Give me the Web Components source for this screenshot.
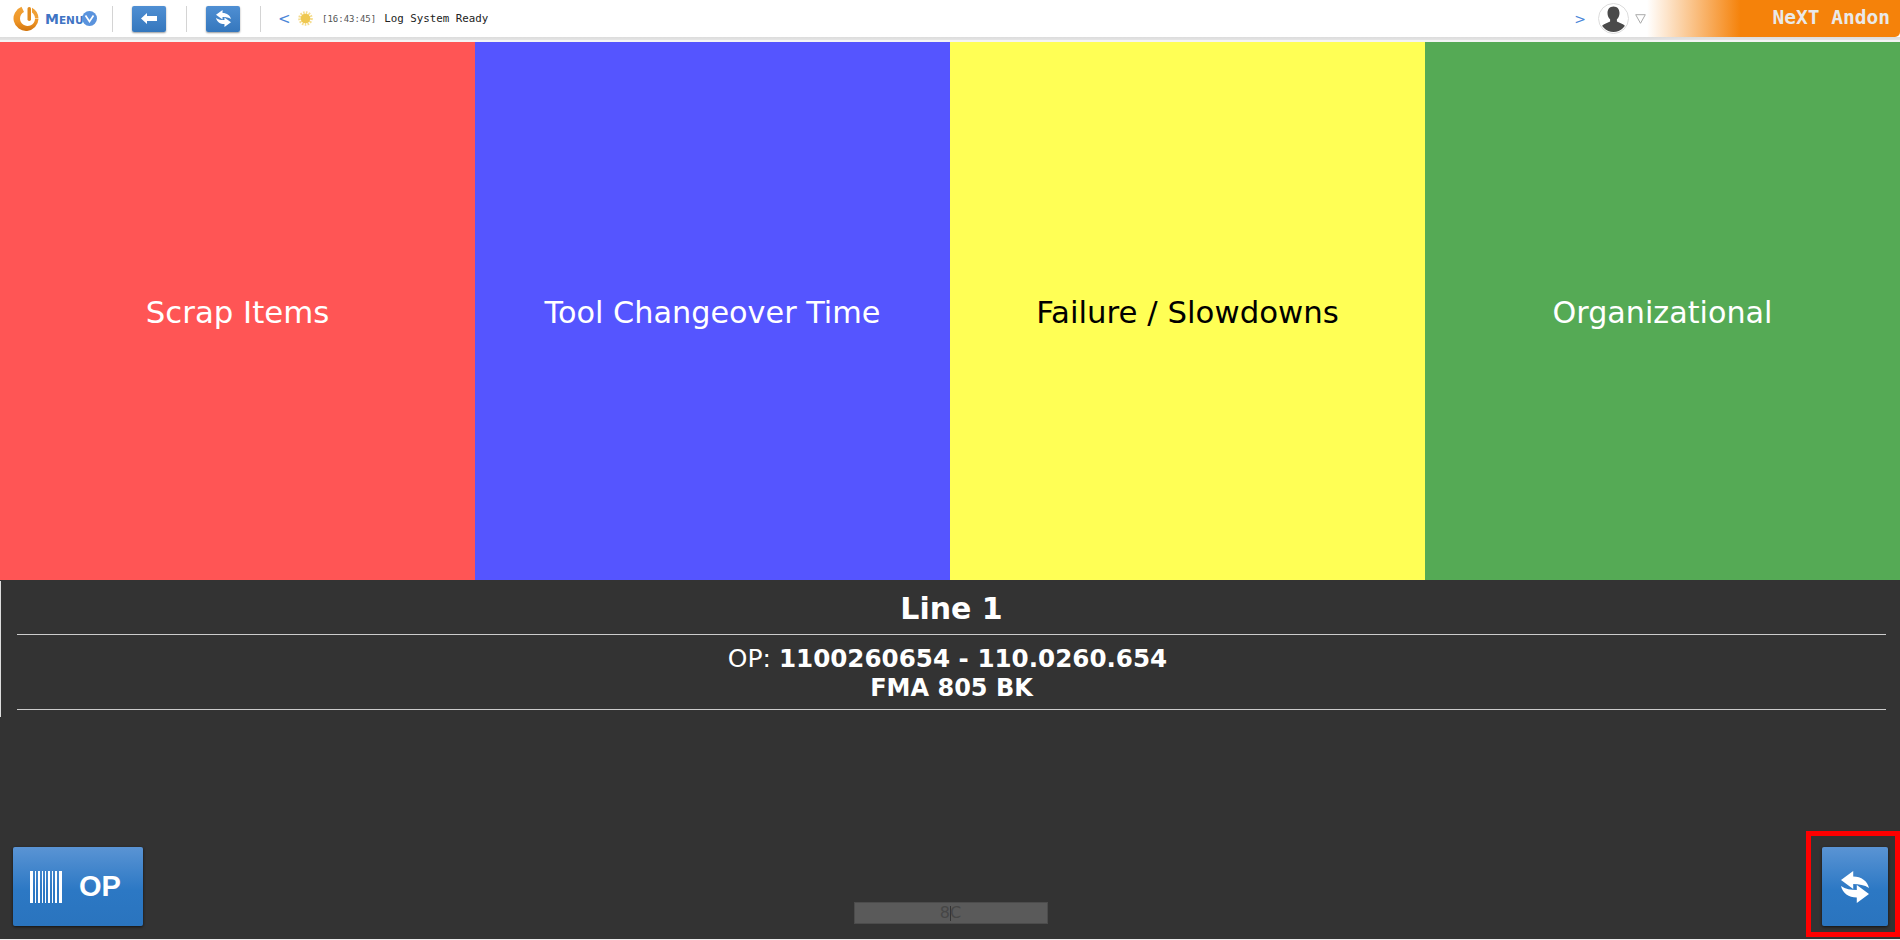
<!DOCTYPE html>
<html><head><meta charset="utf-8">
<style>
html,body{margin:0;padding:0;height:100%;overflow:hidden;background:#333;}
</style></head><body>
<template id="t-root">
<style>
:host{display:flex;flex-direction:column;height:940px;width:1900px;font-family:"DejaVu Sans",sans-serif;background:#333}
.tiles{display:grid;grid-template-columns:repeat(4,475px);height:538px;flex:none}
</style>
<top-bar></top-bar>
<div class="tiles">
<cat-tile style="--bg:#ff5555;--fg:#fff;--fs:30.800px">Scrap Items</cat-tile>
<cat-tile style="--bg:#5555ff;--fg:#fff;--fs:30.300px">Tool Changeover Time</cat-tile>
<cat-tile style="--bg:#ffff55;--fg:#000;--fs:30.800px">Failure / Slowdowns</cat-tile>
<cat-tile style="--bg:#55aa55;--fg:#fff;--fs:30.200px">Organizational</cat-tile>
</div>
<info-panel></info-panel>
</template>

<template id="t-bar">
<style>
:host{display:flex;align-items:center;flex:none;height:42px;padding:0 0 5px 12px;box-sizing:border-box;background:linear-gradient(#fff 37px,#dcdcdc 37px,#e4e4e4 40px,#f4f4f4 40px);font-family:"DejaVu Sans Mono","Liberation Mono",monospace}
.logo{flex:none;display:block}
.menu{display:inline-block;width:37px;margin-left:6px;font:bold 10.500px "DejaVu Sans",sans-serif;color:#3f74c4;white-space:nowrap;flex:none}
.menu span{font-size:14px}
.v{width:15px;height:15px;border-radius:50%;background:#5a93dd;display:inline-flex;align-items:center;justify-content:center;flex:none}
.sep{width:1px;height:26px;background:#d4d4d4;flex:none}
.s1{margin:0 19px 0 15px}.s2{margin:0 19px 0 20px}.s3{margin:0 17px 0 20px}
.lt{color:#4a86d8;font:15px "DejaVu Sans",sans-serif;width:20px;flex:none}
.time{font-size:9px;color:#555;margin-left:9px;white-space:nowrap}
.msg{font-size:10.800px;color:#222;margin-left:8px;white-space:nowrap}
.spacer{flex:1}
.gt{color:#4a86d8;font:14px "DejaVu Sans",sans-serif;margin-right:12px;flex:none}
.avatar{width:31px;height:31px;flex:none;display:block}
.tri{margin-left:6px;flex:none}
.brand{width:253px;align-self:stretch;margin-left:1px;display:flex;align-items:center;justify-content:flex-end;padding-right:10px;box-sizing:border-box;background:linear-gradient(90deg,rgba(245,130,10,0),#f5820a 37%);border-bottom-right-radius:5px;color:#e9e9e9;font:bold 19.500px "DejaVu Sans Mono",monospace;flex:none}
.brand-text{transform:translateY(-1px)}
</style>
<svg class="logo" width="27" height="26" viewBox="0 0 27 26">
<defs><linearGradient id="lg" x1="0" y1="0" x2="0" y2="1"><stop offset="0" stop-color="#f2a338"/><stop offset=".6" stop-color="#ee9526"/><stop offset="1" stop-color="#d2750e"/></linearGradient></defs>
<path d="M9.500.800A12.500 12.500 0 1 0 26.500 13H23A7.500 7.500 0 1 1 12 5.900z" fill="url(#lg)"/>
<path d="M20 1.800A12.500 12.500 0 0 1 26.500 12.500H23A7.500 7.500 0 0 0 20 6.500z" fill="#f0a035"/>
<rect x="15.500" y="1" width="3.500" height="14" rx="1.700" fill="#e08a1e"/>
</svg>
<span class="menu"><span>M</span>ENU</span>
<span class="v"><svg width="11" height="9" viewBox="0 0 11 9"><path d="M1.500 1.500l4 6 4-6" fill="none" stroke="#fff" stroke-width="1.700"/></svg></span>
<span class="sep s1"></span>
<bar-btn><svg width="16" height="11" viewBox="0 0 16 11"><path d="M0 5.500L6 0v3h10v5H6v3z" fill="#fff"/></svg></bar-btn>
<span class="sep s2"></span>
<bar-btn><sync-icon style="--w:15px;--h:17px"></sync-icon></bar-btn>
<span class="sep s3"></span>
<span class="lt">&lt;</span>
<svg width="15" height="15" viewBox="0 0 15 15" style="flex:none"><circle cx="7.500" cy="7.500" r="5.800" fill="none" stroke="#f5dc8c" stroke-width="3" stroke-dasharray="1.500 1.200"/><circle cx="7.500" cy="7.500" r="4.800" fill="#efc850"/></svg>
<span class="time">[16:43:45]</span><span class="msg">Log System Ready</span>
<span class="spacer"></span>
<span class="gt">&gt;</span>
<svg class="avatar" viewBox="0 0 31 31"><circle cx="15.500" cy="15.500" r="15" fill="#fff" stroke="#dcdcdc"/><clipPath id="ac"><circle cx="15.500" cy="15.500" r="13.500"/></clipPath><path clip-path="url(#ac)" d="M15.500 3.500c3.800 0 6 2.800 6 6.500 0 2.800-1.100 5-2.600 6.300v2.200l6 2.800c1.700.8 2.600 2.100 2.600 3.700v6H3.500v-6c0-1.600.9-2.900 2.600-3.700l6-2.800v-2.200c-1.500-1.300-2.600-3.500-2.600-6.300 0-3.700 2.200-6.500 6-6.500z" fill="#4a4a4a"/></svg>
<svg class="tri" width="11" height="10" viewBox="0 0 11 10"><path d="M.7.700h9.600L5.500 9.300z" fill="#fff" stroke="#aaa"/></svg>
<div class="brand"><span class="brand-text">NeXT Andon</span></div>
</template>

<template id="t-btn">
<style>
:host{display:flex;align-items:center;justify-content:center;width:34px;height:26px;border-radius:2px;background:linear-gradient(#4f8fd3,#3577bd);box-shadow:0 1px 2px #0006;flex:none}
</style><slot></slot>
</template>

<template id="t-sync">
<style>:host{display:inline-block;width:var(--w);height:var(--h);line-height:0}svg{width:100%;height:100%;display:block}</style>
<svg viewBox="0 0 27.500 32" preserveAspectRatio="none"><path d="M0 9L12 0V5.500C20 5.500 26 10 27.500 17 23 14 18 13 12 13V18z" fill="#fff"/><path d="M0 9L12 0V5.500C20 5.500 26 10 27.500 17 23 14 18 13 12 13V18z" fill="#fff" transform="rotate(180 13.750 16)"/></svg>
</template>

<template id="t-tile">
<style>:host{display:flex;align-items:center;justify-content:center;background:var(--bg);color:var(--fg);font:var(--fs) "DejaVu Sans",sans-serif;padding-top:2px;box-sizing:border-box}</style><slot></slot>
</template>

<template id="t-panel">
<style>
:host{display:flex;flex-direction:column;flex:1;position:relative;background:#333;color:#fff;padding:0 14px 13px 17px;border-bottom:1px solid #eee;box-sizing:border-box;font-family:"DejaVu Sans",sans-serif;text-align:center}
.edge{position:absolute;left:0;top:1px;width:1px;height:136px;background:#ddd}
h1{font-size:30px;font-weight:bold;margin:0;height:54px;line-height:57px;border-bottom:1px solid #ccc;flex:none}
.op{height:64px;padding-top:10px;border-bottom:1px solid #ccc;font-size:25px;line-height:29px;flex:none}
.l1{margin:-1px 8px 1px 0}
.num{font-weight:bold;font-size:24.600px}
.fma{font-weight:bold;font-size:24px}
.foot{flex:1;display:grid;grid-template-columns:1fr auto 1fr;align-items:end;margin:0 -2px 0 -4px}
.opbtn,.sync{background:linear-gradient(#5a94d4 0,#2c78c4 55%,#2a74be);box-shadow:0 1px 3px #000a;border-radius:2px;display:flex;align-items:center;height:79px}
.opbtn{width:130px;gap:17px;padding-left:17px;font:bold 29px "Liberation Sans",sans-serif;box-sizing:border-box}
.sync{width:66px;justify-self:end;justify-content:center}
.field{width:194px;height:22px;margin-bottom:2px;background:#5a5a5a;outline:1px solid #4c4c4c;outline-offset:-1px;color:#464646;font-size:16px;line-height:22px;display:flex;align-items:center;justify-content:center}
.caret{width:0;height:15px;border-left:1px solid #333;margin:0 -.5px}
.mark{position:absolute;right:0;bottom:2px;width:94px;height:106px;border:5px solid #f00;box-sizing:border-box}
</style>
<span class="edge"></span>
<h1>Line 1</h1>
<div class="op"><div class="l1">OP: <span class="num">1100260654 - 110.0260.654</span></div><div class="fma">FMA 805 BK</div></div>
<div class="foot">
<div class="opbtn"><svg width="32" height="32" viewBox="0 0 32 32"><path d="M0 0h3v32H0zM5 0h1v32H5zM8 0h2v32H8zM12 0h1v32h-1zM15 0h1v32h-1zM18 0h2v32h-2zM22 0h1v32h-1zM25 0h2v32h-2zM29 0h3v32h-3z" fill="#fff"/></svg><span>OP</span></div>
<div class="field">8<span class="caret"></span>C</div>
<div class="sync"><sync-icon style="--w:28px;--h:32px"></sync-icon></div>
</div>
<div class="mark"></div>
</template>

<script>
function def(name,id){customElements.define(name,class extends HTMLElement{constructor(){super();this.attachShadow({mode:'open'}).appendChild(document.getElementById(id).content.cloneNode(true));}});}
def('sync-icon','t-sync');def('bar-btn','t-btn');def('cat-tile','t-tile');def('top-bar','t-bar');def('info-panel','t-panel');def('app-root','t-root');
</script>
<app-root></app-root>
</body></html>
